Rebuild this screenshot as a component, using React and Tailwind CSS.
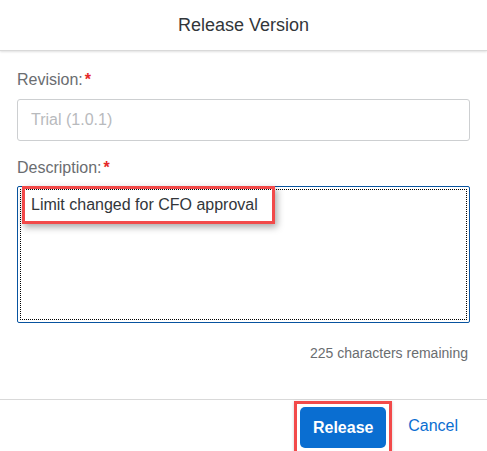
import React from 'react';

function Label({ text }) {
  return (
    <div className="flex h-[20px] items-center text-[16px] text-[#6a6d70]">
      {text}
      <span className="ml-[2px] font-bold text-[#e52929]">*</span>
    </div>
  );
}

export default function App() {
  return (
    <div
      className="flex h-[451px] w-[487px] flex-col overflow-hidden bg-white"
      style={{ fontFamily: '"Liberation Sans", Arial, sans-serif' }}
    >
      {/* header */}
      <div className="relative z-10 flex h-[51px] shrink-0 items-center justify-center border-b border-[#d9d9d9] bg-white pt-[1px] shadow-[0_1px_2px_rgba(0,0,0,0.12)]">
        <span className="text-[18px] text-[#32363a]">Release Version</span>
      </div>

      {/* body */}
      <div className="flex flex-col px-[17px]">
        <div className="mt-[19px]">
          <Label text="Revision:" />
        </div>
        <div className="mt-[9px] flex h-[42px] items-center rounded-[3px] border border-[#cdcfd1] px-[13px] text-[16px] text-[#b8babd]">
          Trial (1.0.1)
        </div>
        <div className="mt-[17px]">
          <Label text="Description:" />
        </div>
        <div className="relative mt-[8px] h-[137px] rounded-[2px] border border-[#0854a0]">
          <div className="pointer-events-none absolute inset-[2px] border border-dotted border-black" />
          <div className="absolute left-[4px] top-[-1px] flex h-[38px] w-[253px] items-center border-[3px] border-[#f24a4a] pl-[6px] text-[16px] text-[#32363a] shadow-[2px_3px_7px_rgba(0,0,0,0.35)]">
            Limit changed for CFO approval
          </div>
        </div>
        <div className="mt-[20px] flex justify-end pr-[2px] text-[14px] text-[#6a6d70]">
          225 characters remaining
        </div>
      </div>

      <div className="flex-1" />

      {/* footer */}
      <div className="flex h-[52px] shrink-0 items-start justify-end border-t border-[#d9d9d9] pr-[29px] pt-[1px]">
        <div className="border-[3px] border-[#f24a4a] p-[3px] shadow-[0_1px_3px_rgba(0,0,0,0.2)]">
          <button className="flex h-[41px] w-[86px] items-center justify-center rounded-[5px] bg-[#0a6ed1] text-[16px] font-bold text-white">
            Release
          </button>
        </div>
        <button className="ml-[16px] mt-[11px] h-[28px] text-[16px] text-[#0a6ed1]">Cancel</button>
      </div>
    </div>
  );
}
